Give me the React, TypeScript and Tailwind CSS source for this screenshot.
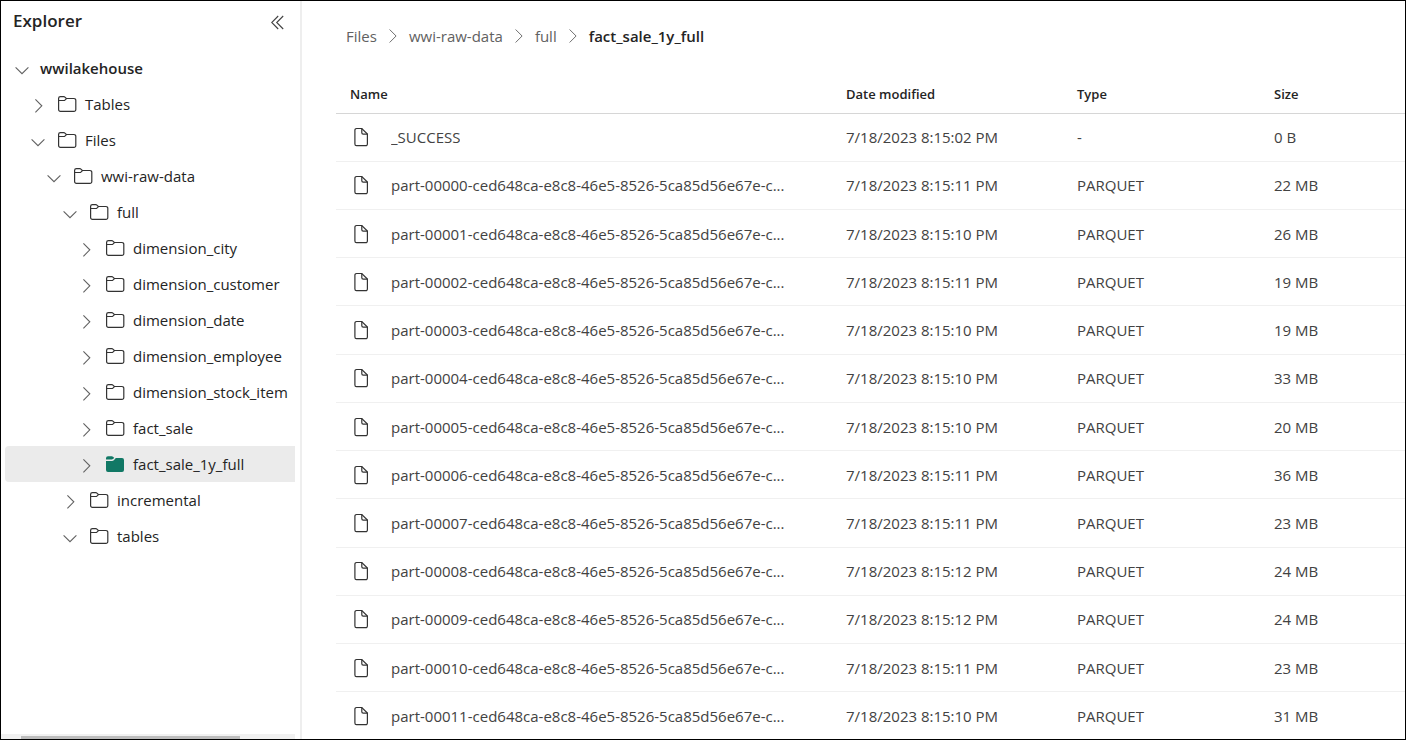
import React from "react";

type Node = {
  name: string;
  level: number;
  open?: boolean;
  selected?: boolean;
};

const tree: Node[] = [
  { name: "wwilakehouse", level: 0, open: true },
  { name: "Tables", level: 1 },
  { name: "Files", level: 1, open: true },
  { name: "wwi-raw-data", level: 2, open: true },
  { name: "full", level: 3, open: true },
  { name: "dimension_city", level: 4 },
  { name: "dimension_customer", level: 4 },
  { name: "dimension_date", level: 4 },
  { name: "dimension_employee", level: 4 },
  { name: "dimension_stock_item", level: 4 },
  { name: "fact_sale", level: 4 },
  { name: "fact_sale_1y_full", level: 4, selected: true },
  { name: "incremental", level: 3 },
  { name: "tables", level: 3, open: true },
];

const indent = ["pl-[9px]", "pl-[25px]", "pl-[41px]", "pl-[57px]", "pl-[73px]"];

const part = (n: string) => `part-${n}-ced648ca-e8c8-46e5-8526-5ca85d56e67e-c...`;

const files = [
  ["_SUCCESS", "7/18/2023 8:15:02 PM", "-", "0 B"],
  [part("00000"), "7/18/2023 8:15:11 PM", "PARQUET", "22 MB"],
  [part("00001"), "7/18/2023 8:15:10 PM", "PARQUET", "26 MB"],
  [part("00002"), "7/18/2023 8:15:11 PM", "PARQUET", "19 MB"],
  [part("00003"), "7/18/2023 8:15:10 PM", "PARQUET", "19 MB"],
  [part("00004"), "7/18/2023 8:15:10 PM", "PARQUET", "33 MB"],
  [part("00005"), "7/18/2023 8:15:10 PM", "PARQUET", "20 MB"],
  [part("00006"), "7/18/2023 8:15:11 PM", "PARQUET", "36 MB"],
  [part("00007"), "7/18/2023 8:15:11 PM", "PARQUET", "23 MB"],
  [part("00008"), "7/18/2023 8:15:12 PM", "PARQUET", "24 MB"],
  [part("00009"), "7/18/2023 8:15:12 PM", "PARQUET", "24 MB"],
  [part("00010"), "7/18/2023 8:15:11 PM", "PARQUET", "23 MB"],
  [part("00011"), "7/18/2023 8:15:10 PM", "PARQUET", "31 MB"],
];

function Chevron({ open }: { open?: boolean }) {
  return (
    <svg viewBox="0 0 16 20" className="h-5 w-4 shrink-0" fill="none" stroke="#616161" strokeWidth="1.1" aria-hidden="true">
      <path d={open ? "M1.6 9.3 8 15.7 14.4 9.3" : "M5.4 5.3 11.8 11.8 5.4 18.3"} />
    </svg>
  );
}

function Folder({ filled }: { filled?: boolean }) {
  if (filled) {
    return (
      <svg viewBox="0 0 20 20" className="size-5 shrink-0" fill="#117865" aria-hidden="true">
        <path d="M0 5.6V4.2A2 2 0 0 1 2 2.2H5.9a1.6 1.6 0 0 1 1.1.5L8.3 4 6.9 5.1a1.6 1.6 0 0 1-1.1.5Z" />
        <path d="M0 7H6a2.6 2.6 0 0 0 1.8-.8L9.8 4.1H16A2 2 0 0 1 18 6.1V16A2 2 0 0 1 16 18H2A2 2 0 0 1 0 16Z" />
      </svg>
    );
  }
  return (
    <svg viewBox="0 0 20 20" className="size-5 shrink-0" fill="none" stroke="#333" strokeWidth="1.2" aria-hidden="true">
      <path d="M0.6 4.4A1.8 1.8 0 0 1 2.4 2.7H5.9a1.4 1.4 0 0 1 1 .4L8.3 4.5H16A1.8 1.8 0 0 1 17.8 6.3V15.6A1.8 1.8 0 0 1 16 17.4H2.4A1.8 1.8 0 0 1 .6 15.6Z" />
      <path d="M0.6 6.5H5.9a1.4 1.4 0 0 0 1-.4L8.5 4.6" />
    </svg>
  );
}

function FileIcon() {
  return (
    <svg viewBox="0 0 14 20" className="h-5 w-3.5 shrink-0" fill="none" stroke="#333" strokeWidth="1.2" aria-hidden="true">
      <path d="M2.5 1.5H7.8L13.4 7.1V17.1A1.6 1.6 0 0 1 11.8 18.7H2.5A1.6 1.6 0 0 1 .9 17.1V3.1A1.6 1.6 0 0 1 2.5 1.5Z" />
      <path d="M7.8 1.5V5.7A1.4 1.4 0 0 0 9.2 7.1H13.4" />
    </svg>
  );
}

function Separator() {
  return (
    <svg viewBox="0 0 8 16" className="h-4 w-2 shrink-0" fill="none" stroke="#707070" aria-hidden="true">
      <path d="M0.6 1.5 7.1 8 0.6 14.5" />
    </svg>
  );
}

export default function App() {
  return (
    <div className="flex h-screen overflow-hidden border border-black bg-white font-['Open_Sans','Noto_Sans',sans-serif] text-[#242424]">
      <aside className="flex w-[301px] shrink-0 flex-col border-r-2 border-[#eeeeee]">
        <header className="flex h-[49px] items-start justify-between pt-2 pr-[15px] pl-3">
          <h1 className="text-[17px] leading-6 font-semibold">Explorer</h1>
          <button type="button" aria-label="Collapse explorer" className="mt-1">
            <svg viewBox="0 0 14 20" className="h-5 w-3.5" fill="none" stroke="#424242" strokeWidth="1.1" aria-hidden="true">
              <path d="M7.2 3 0.7 9.5 7.2 16M12.2 3 5.7 9.5 12.2 16" />
            </svg>
          </button>
        </header>
        <nav aria-label="Lakehouse" className="min-h-0 flex-1 overflow-hidden pr-[5px] pl-1">
          <ul>
            {tree.map((n) => (
              <li key={n.name}>
                <button
                  type="button"
                  aria-expanded={!!n.open}
                  className={`flex h-9 w-full items-center rounded-l-sm text-left text-[15px] leading-5 whitespace-nowrap ${indent[n.level]} ${n.selected ? "bg-[#ebebeb]" : ""} ${n.level === 0 ? "gap-2.5 font-semibold" : "gap-3"}`}
                >
                  <Chevron open={n.open} />
                  {n.level === 0 ? (
                    <span>{n.name}</span>
                  ) : (
                    <span className="flex items-center gap-[7px]">
                      <Folder filled={n.selected} />
                      <span>{n.name}</span>
                    </span>
                  )}
                </button>
              </li>
            ))}
          </ul>
        </nav>
        <div className="mr-[5px] h-[5px] bg-[#f1f1f1] pt-0.5 pl-5">
          <div className="h-full w-4/5 bg-[#bdbdbd]" />
        </div>
      </aside>

      <main className="flex min-w-0 flex-1 flex-col pl-[34px]">
        <nav aria-label="Breadcrumb" className="flex h-[75px] shrink-0 pt-[25px] pl-2.5">
          <ol className="flex h-5 items-center gap-3 text-[15px] leading-5 text-[#616161]">
            <li><a href="#files">Files</a></li>
            <li><Separator /></li>
            <li><a href="#wwi-raw-data">wwi-raw-data</a></li>
            <li><Separator /></li>
            <li><a href="#full">full</a></li>
            <li><Separator /></li>
            <li><a href="#fact_sale_1y_full" aria-current="page" className="font-semibold text-[#242424]">fact_sale_1y_full</a></li>
          </ol>
        </nav>
        <div className="min-h-0 flex-1">
          <table className="h-full w-full table-fixed border-collapse text-left">
            <colgroup>
              <col />
              <col className="w-[231px]" />
              <col className="w-[197px]" />
              <col className="w-[145px]" />
            </colgroup>
            <thead>
              <tr className="h-[37px] border-b border-[#d6d6d6] text-[13px] leading-5">
                <th className="px-3.5 font-semibold">Name</th>
                <th className="px-3.5 font-semibold">Date modified</th>
                <th className="px-3.5 font-semibold">Type</th>
                <th className="px-3.5 font-semibold">Size</th>
              </tr>
            </thead>
            <tbody>
              {files.map(([name, date, type, size]) => (
                <tr key={name} className="border-b border-[#f0f0f0] text-[15px] leading-5 text-[#424242] last:border-b-0">
                  <td className="pr-3.5 pl-[18px]">
                    <div className="flex items-center gap-[23px]">
                      <FileIcon />
                      <span className="truncate">{name}</span>
                    </div>
                  </td>
                  <td className="px-3.5 whitespace-nowrap">{date}</td>
                  <td className="px-3.5">{type}</td>
                  <td className="px-3.5">{size}</td>
                </tr>
              ))}
            </tbody>
          </table>
        </div>
      </main>
    </div>
  );
}
